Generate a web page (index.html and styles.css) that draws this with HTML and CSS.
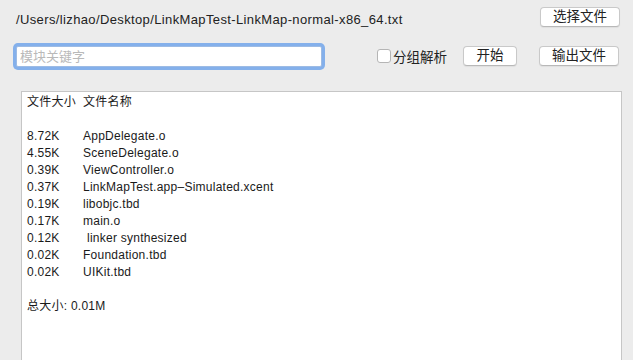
FILE: index.html
```html
<!DOCTYPE html>
<html lang="zh-CN">
<head>
    <meta charset="UTF-8">
    <title>LinkMap</title>
    <link rel="stylesheet" href="styles.css">
</head>
<body>
    <div class="window">
        <div class="top-row">
            <span class="file-path">/Users/lizhao/Desktop/LinkMapTest-LinkMap-normal-x86_64.txt</span>
            <button class="btn btn-wide">选择文件</button>
        </div>

        <div class="tool-row">
            <input class="search" type="text" placeholder="模块关键字">
            <label class="group-check">
                <span class="checkbox"></span>
                <span>分组解析</span>
            </label>
            <button class="btn btn-start">开始</button>
            <button class="btn btn-wide">输出文件</button>
        </div>

        <div class="result">
            <div class="row"><span>文件大小</span><span>文件名称</span></div>
            <div class="row blank"></div>
            <div class="row"><span>8.72K</span><span>AppDelegate.o</span></div>
            <div class="row"><span>4.55K</span><span>SceneDelegate.o</span></div>
            <div class="row"><span>0.39K</span><span>ViewController.o</span></div>
            <div class="row"><span>0.37K</span><span>LinkMapTest.app&#8211;Simulated.xcent</span></div>
            <div class="row"><span>0.19K</span><span>libobjc.tbd</span></div>
            <div class="row"><span>0.17K</span><span>main.o</span></div>
            <div class="row"><span>0.12K</span><span class="indent">linker synthesized</span></div>
            <div class="row"><span>0.02K</span><span>Foundation.tbd</span></div>
            <div class="row"><span>0.02K</span><span>UIKit.tbd</span></div>
            <div class="row blank"></div>
            <div class="row total">总大小: 0.01M</div>
        </div>
    </div>
</body>
</html>
```

FILE: styles.css
```css
* {
    margin: 0;
    padding: 0;
    box-sizing: border-box;
}

body {
    background: #ececec;
    color: #222;
    font-family: 'Liberation Sans', 'Noto Sans CJK SC', sans-serif;
    width: 633px;
    height: 360px;
    overflow: hidden;
}

.window {
    padding: 7px 13px 0 16px;
}

.top-row {
    display: flex;
    justify-content: space-between;
    align-items: flex-start;
    height: 20px;
}

.file-path {
    margin-top: 5px;
    font-size: 13px;
    line-height: 15px;
    letter-spacing: 0.37px;
    color: #222;
}

.btn {
    flex-shrink: 0;
    height: 20px;
    background: #fff;
    border: 1px solid #c9c9c9;
    border-bottom-color: #b8b8b8;
    border-radius: 4px;
    box-shadow: 0 1px 1px rgba(0, 0, 0, 0.06);
    font-family: 'Liberation Sans', 'Noto Sans CJK SC', sans-serif;
    font-size: 13.5px;
    color: #222;
    line-height: 18px;
    white-space: nowrap;
}

.btn-wide {
    width: 80px;
}

.btn-start {
    width: 54px;
    margin-right: 22px;
}

.tool-row {
    display: flex;
    align-items: center;
    margin: 18px 0 0 -3px;
    height: 22px;
}

.search {
    flex-shrink: 0;
    width: 306px;
    height: 21px;
    margin-left: 3px;
    border: 1px solid #9dbbe4;
    border-radius: 2px;
    box-shadow: 0 0 0 3px #84b0eb;
    outline: none;
    padding-left: 3px;
    font-family: 'Liberation Sans', 'Noto Sans CJK SC', sans-serif;
    font-size: 13px;
}

.search::placeholder {
    color: #b9b9b9;
}

.group-check {
    flex-shrink: 0;
    display: flex;
    align-items: center;
    gap: 2px;
    margin-left: 55px;
    margin-right: 16px;
    font-size: 13.5px;
    color: #222;
    white-space: nowrap;
}

.checkbox {
    width: 14px;
    height: 14px;
    background: #fff;
    border: 1px solid #b5b5b5;
    border-radius: 3px;
}

.result {
    margin: 24px 0 0 5px;
    width: 601px;
    height: 280px;
    background: #fff;
    border: 1px solid #c6c6c6;
    padding: 2px 0 0 5px;
    font-size: 12px;
    letter-spacing: 0.25px;
    color: #1a1a1a;
}

.row {
    display: grid;
    grid-template-columns: 56px 1fr;
    height: 17px;
    line-height: 17px;
}

.indent {
    padding-left: 4px;
}

.total {
    display: block;
}
```
